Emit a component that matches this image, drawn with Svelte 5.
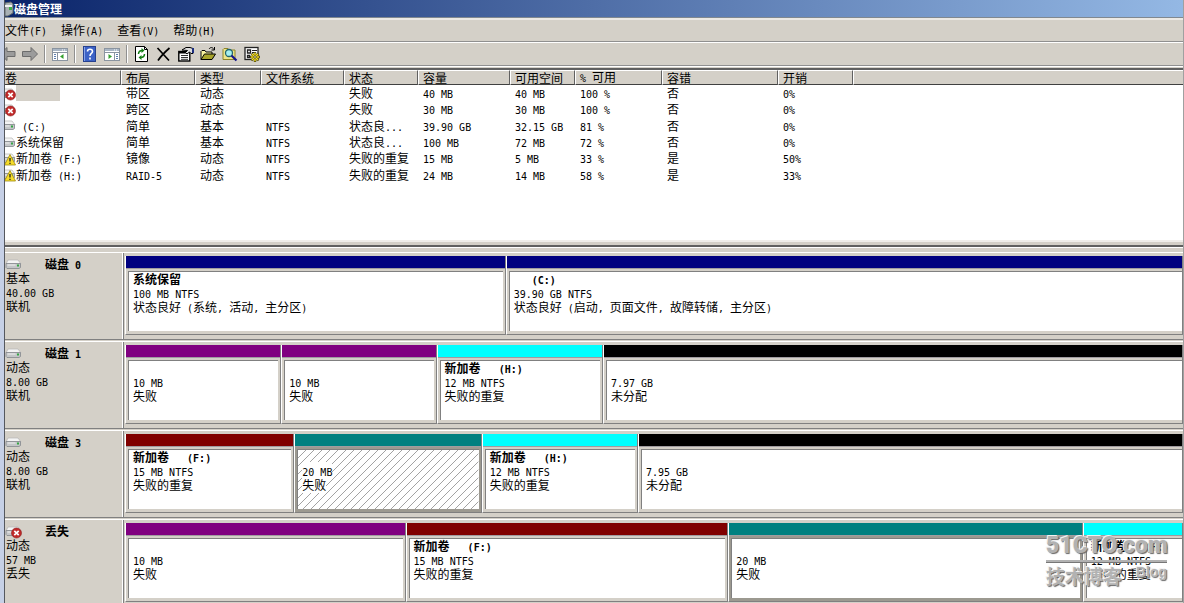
<script>
  // Menu bar
  const menus = ['文件(F)', '操作(A)', '查看(V)', '帮助(H)'];

  // Toolbar, in order
  const tools = [
    { id: 'back', label: '后退' },
    { id: 'forward', label: '前进' },
    { id: 'sep1' },
    { id: 'tree', label: '显示/隐藏控制台树' },
    { id: 'sep2' },
    { id: 'help', label: '帮助' },
    { id: 'actions', label: '显示/隐藏操作窗格' },
    { id: 'sep3' },
    { id: 'refresh', label: '刷新' },
    { id: 'delete', label: '删除' },
    { id: 'props', label: '属性' },
    { id: 'open', label: '打开' },
    { id: 'find', label: '查找' },
    { id: 'settings', label: '设置' }
  ];

  const columns = [
    { label: '卷', width: 116 },
    { label: '布局', width: 74 },
    { label: '类型', width: 66 },
    { label: '文件系统', width: 83 },
    { label: '状态', width: 74 },
    { label: '容量', width: 92 },
    { label: '可用空间', width: 65 },
    { label: '% 可用', width: 87 },
    { label: '容错', width: 116 },
    { label: '开销', width: 75 }
  ];

  const volumes = [
    { icon: 'error', name: '', selected: true, cells: ['带区', '动态', '', '失败', '40 MB', '40 MB', '100 %', '否', '0%'] },
    { icon: 'error', name: '', cells: ['跨区', '动态', '', '失败', '30 MB', '30 MB', '100 %', '否', '0%'] },
    { icon: 'ok', name: ' (C:)', cells: ['简单', '基本', 'NTFS', '状态良...', '39.90 GB', '32.15 GB', '81 %', '否', '0%'] },
    { icon: 'ok', name: '系统保留', cells: ['简单', '基本', 'NTFS', '状态良...', '100 MB', '72 MB', '72 %', '否', '0%'] },
    { icon: 'warn', name: '新加卷 (F:)', cells: ['镜像', '动态', 'NTFS', '失败的重复', '15 MB', '5 MB', '33 %', '是', '50%'] },
    { icon: 'warn', name: '新加卷 (H:)', cells: ['RAID-5', '动态', 'NTFS', '失败的重复', '24 MB', '14 MB', '58 %', '是', '33%'] }
  ];

  const navy = '#000080';
  const purple = '#800080';
  const cyan = '#00ffff';
  const maroon = '#800000';
  const teal = '#008080';
  const black = '#000000';

  // size is the share of the row's width
  const disks = [
    {
      name: '磁盘 0', icon: 'ok', info: ['基本', '40.00 GB', '联机'],
      parts: [
        { size: 378, color: navy, lines: ['系统保留', '100 MB NTFS', '状态良好 (系统, 活动, 主分区)'] },
        { size: 674, color: navy, lines: ['   (C:)', '39.90 GB NTFS', '状态良好 (启动, 页面文件, 故障转储, 主分区)'] }
      ]
    },
    {
      name: '磁盘 1', icon: 'ok', info: ['动态', '8.00 GB', '联机'],
      parts: [
        { size: 154, color: purple, lines: ['', '10 MB', '失败'] },
        { size: 153, color: purple, lines: ['', '10 MB', '失败'] },
        { size: 164, color: cyan, lines: ['新加卷   (H:)', '12 MB NTFS', '失败的重复'] },
        { size: 577, color: black, lines: ['', '7.97 GB', '未分配'] }
      ]
    },
    {
      name: '磁盘 3', icon: 'ok', info: ['动态', '8.00 GB', '联机'],
      parts: [
        { size: 167, color: maroon, lines: ['新加卷   (F:)', '15 MB NTFS', '失败的重复'] },
        { size: 185, color: teal, frame: true, hatch: true, lines: ['', '20 MB', '失败'] },
        { size: 154, color: cyan, lines: ['新加卷   (H:)', '12 MB NTFS', '失败的重复'] },
        { size: 542, color: black, lines: ['', '7.95 GB', '未分配'] }
      ]
    },
    {
      name: '丢失', icon: 'error', info: ['动态', '57 MB', '丢失'],
      parts: [
        { size: 278, color: purple, lines: ['', '10 MB', '失败'] },
        { size: 320, color: maroon, lines: ['新加卷   (F:)', '15 MB NTFS', '失败的重复'] },
        { size: 352, color: teal, frame: true, lines: ['', '20 MB', '失败'] },
        { size: 98, color: cyan, lines: ['新加卷   (H:)', '12 MB NTFS', '失败的重复'] }
      ]
    }
  ];

  // Split into half-width and full-width runs, each gets its own font
  function runs(text) {
    return text
      .split(/([\x20-\x7e]+)/)
      .filter(Boolean)
      .map((t) => ({ t, half: /^[\x20-\x7e]/.test(t) }));
  }
</script>

{#snippet txt(text)}{#each runs(text) as r}<span class:half={r.half}>{r.t}</span>{/each}{/snippet}

{#snippet drive(state)}
  <svg class="drive" width="17" height="15" viewBox="0 0 17 15" aria-hidden="true">
    <path d="M3 3h10l3 4H1z" fill="#f4f4f4" stroke="#b4b4b4" stroke-width=".7" />
    <path d="M1 6.500h14.500v4L14 11.500H2L1 10.500z" fill="#c4c6c8" stroke="#83878b" stroke-width=".8" />
    <path d="M2.500 8h8" stroke="#eee" />
    <rect x="12" y="7.500" width="2" height="2" fill="#35a545" />
    {#if state === 'error'}
      <circle cx="11.500" cy="9" r="5" fill="#c02a2a" stroke="#8e1d1d" stroke-width=".6" />
      <path d="M9.300 6.800l4.400 4.400M13.700 6.800l-4.400 4.400" stroke="#fff" stroke-width="1.700" />
    {:else if state === 'warn'}
      <path d="M11 3.500L16.500 14h-11z" fill="#f6dc2a" stroke="#a08a10" stroke-width=".8" />
      <path d="M11 7v3.500M11 11.700v1.300" stroke="#222" stroke-width="1.300" />
    {/if}
  </svg>
{/snippet}

{#snippet toolIcon(id)}
  <svg width="16" height="16" viewBox="0 0 16 16" aria-hidden="true">
    {#if id === 'back'}
      <path d="M-5 8l7-6.500v4h8v5H2v4z" fill="#9b9b9b" stroke="#6c6c6c" />
    {:else if id === 'forward'}
      <path d="M15.500 8L9 1.500v4H.5v5H9v4z" fill="#9b9b9b" stroke="#6c6c6c" />
    {:else if id === 'tree' || id === 'actions'}
      <rect x=".5" y="2.500" width="15" height="12" fill="#fff" stroke="#8a94a0" />
      <path d="M1 4h14" stroke="#a9b6c5" stroke-width="2" />
      <path d="M1 6.500h14" stroke="#8a94a0" />
      <path d="M10 4h1M12 4h1" stroke="#fff" />
      {#if id === 'tree'}
        <path d="M5.500 7v7" stroke="#8a94a0" />
        <path d="M2 8.500h2M2 10.500h2M2 12.500h2" stroke="#5f7fae" />
        <path d="M11.500 8v5L8 10.500z" fill="#35a02f" />
      {:else}
        <path d="M10.500 7v7" stroke="#8a94a0" />
        <path d="M12 8.500h2M12 10.500h2M12 12.500h2" stroke="#5f7fae" />
        <path d="M4.500 8v5L8 10.500z" fill="#35a02f" />
      {/if}
    {:else if id === 'help'}
      <rect x="1.500" y=".5" width="12" height="15" fill="#3c62c6" stroke="#26418f" />
      <path d="M2.500 1v14" stroke="#86a3ea" />
      <path d="M5.500 5.500c0-3 5-3 5 0 0 2-2.500 2-2.500 4.500M8 11.500v2" fill="none" stroke="#fff" stroke-width="1.600" />
    {:else if id === 'refresh'}
      <path d="M1.500.5h9l3 3v12h-12z" fill="#fff" stroke="#000" />
      <path d="M10.500.5v3h3" fill="none" stroke="#000" />
      <path d="M4.500 8c0-2.500 1.500-3.500 4-3.500M10.500 8c0 2.500-1.500 3.500-4 3.500" fill="none" stroke="#158015" stroke-width="1.500" />
      <path d="M7.500 2l3 2.500-3 2.500zM7.500 9l-3 2.500 3 2.500z" fill="#158015" />
    {:else if id === 'delete'}
      <path d="M1.500 2L13 14.500M13.500 2C9 6 5 10 2 14.500" stroke="#000" stroke-width="1.700" fill="none" />
    {:else if id === 'props'}
      <rect x=".8" y="5.500" width="11" height="9.500" fill="#fff" stroke="#000" stroke-width="1.400" />
      <path d="M1 6.500h8" stroke="#000" stroke-width="2" />
      <path d="M3 9.500h7M3 11.500h7M3 13.300h7" stroke="#333" />
      <path d="M4 4l4-2.500h4l3 1v5h-2l-1.500-1.500L9 8 7.500 6.500l2-2z" fill="#ddd" stroke="#000" />
      <rect x="14" y="2" width="2" height="5" fill="#1d2f80" />
    {:else if id === 'open'}
      <path d="M1 13.500v-8l1-1h3l1 1.500h6v3" fill="#f7f2a0" stroke="#000" />
      <path d="M1 13.500l3.500-5.500h11l-3.500 5.500z" fill="#a8a42c" stroke="#000" />
      <path d="M9 3c1.500-2 3.500-2 5 .5M14.500 1v3h-3" fill="none" stroke="#000" />
    {:else if id === 'find'}
      <path d="M1 13.500v-10l1-1h4l1 1.500h6v9.500z" fill="#efe58a" stroke="#8f8628" />
      <circle cx="7" cy="7" r="3.500" fill="#a8f0f0" stroke="#22666e" stroke-width="1.300" />
      <path d="M9.500 9.500l5 5" stroke="#16168c" stroke-width="2.200" />
    {:else}
      <rect x="1" y="1.500" width="13" height="12" fill="#fff" stroke="#222" stroke-width="1.300" />
      <path d="M3.500 4h3v3h-3zM3.500 9.500h2v2h-2z" fill="none" stroke="#222" stroke-width="1.300" />
      <path d="M8 4.500h5M8 6.500h4" stroke="#222" />
      <path d="M11 6v10M6 11h10M7.500 7.500l7 7M14.500 7.500l-7 7" stroke="#4a4408" stroke-width="2.400" />
      <path d="M11 6.800v8.400M6.800 11h8.400M8 8l6 6M14 8l-6 6" stroke="#f2dc20" stroke-width="1.500" />
      <circle cx="11" cy="11" r="1.300" fill="#fff" stroke="#5a5208" />
    {/if}
  </svg>
{/snippet}

<div class="window">
  <header class="title">
    <svg width="9" height="16" viewBox="0 0 9 16" aria-hidden="true">
      <path d="M0 2l6-1 2 2v9l-5 3H0z" fill="#a9b0b4" stroke="#5d666c" />
      <path d="M0 5h7" stroke="#f2f2f2" stroke-width="2" />
      <rect x="4" y="6" width="3" height="3" fill="#3cae46" />
    </svg>
    <h1>磁盘管理</h1>
  </header>

  <nav class="menu">
    {#each menus as m (m)}
      <button>{@render txt(m)}</button>
    {/each}
  </nav>

  <div class="toolbar" role="toolbar" aria-label="工具栏">
    {#each tools as tool (tool.id)}
      {#if tool.label}
        <button class:clipped={tool.id === 'back'} aria-label={tool.label}>{@render toolIcon(tool.id)}</button>
      {:else}
        <span class="sep"></span>
      {/if}
    {/each}
  </div>

  <section class="list">
    <table>
      <colgroup>
        {#each columns as c (c.label)}
          <col style="width: {c.width}px" />
        {/each}
        <col />
      </colgroup>
      <thead>
        <tr>
          {#each columns as c (c.label)}
            <th scope="col">{@render txt(c.label)}</th>
          {/each}
          <td></td>
        </tr>
      </thead>
      <tbody>
        {#each volumes as v}
          <tr>
            <td class="name">
              <div>
                <span class="crop">{@render drive(v.icon)}</span>
                <span class="label" class:selected={v.selected}>{@render txt(v.name)}</span>
              </div>
            </td>
            {#each v.cells as cell}
              <td>{@render txt(cell)}</td>
            {/each}
            <td></td>
          </tr>
        {/each}
      </tbody>
    </table>
  </section>

  <div class="splitter"></div>

  <section class="disks">
    {#each disks as disk (disk.name)}
      <article class="disk">
        <div class="info">
          <h2>{@render drive(disk.icon)}<span>{@render txt(disk.name)}</span></h2>
          {#each disk.info as line}
            <p>{@render txt(line)}</p>
          {/each}
        </div>
        <div class="parts">
          {#each disk.parts as part}
            <div class="part" class:frame={part.frame} style="flex-grow: {part.size}">
              <div class="bar" style="background: {part.color}"></div>
              <div class="box">
                <div class="body">
                  {#if part.hatch}
                    <svg class="hatch" width="100%" height="100%" aria-hidden="true">
                      <pattern id="hatch" width="8" height="8" patternUnits="userSpaceOnUse">
                        <path d="M-1 9L9-1M-1 1l2-2M7 9l2-2" stroke="#8c8c8c" stroke-width=".8" />
                      </pattern>
                      <rect width="100%" height="100%" fill="url(#hatch)" />
                    </svg>
                  {/if}
                  {#each part.lines as line, i}
                    <p class:strong={i === 0}><span class:ink={part.hatch}>{@render txt(line)}</span></p>
                  {/each}
                </div>
              </div>
            </div>
          {/each}
        </div>
      </article>
    {/each}
  </section>

  <div class="watermark">
    <strong>51CTO.com</strong>
    <div class="sub"><span>技术博客</span><em>Blog</em></div>
  </div>
</div>

<style>
  :global(body) {
    margin: 0;
    overflow: hidden;
    background: #c6d0e6;
  }

  .window {
    position: relative;
    display: flex;
    flex-direction: column;
    height: 100vh;
    box-sizing: border-box;
    margin-left: 4px;
    border-left: 1px solid #55585e;
    border-right: 1px solid #a0a0a0;
    overflow: hidden;
    background: #d4d0c8;
    color: #000;
    font: 12px/14px 'Noto Sans CJK SC', sans-serif;
  }

  .half {
    font-family: 'DejaVu Sans Mono', monospace;
    font-size: 10px;
    line-height: 10px;
    white-space: pre;
  }

  h1,
  h2,
  p {
    margin: 0;
    font-size: 12px;
  }

  button {
    padding: 0;
    border: none;
    background: none;
    color: inherit;
    font: inherit;
  }

  svg {
    display: block;
  }

  .title {
    display: flex;
    align-items: center;
    height: 17px;
    background: linear-gradient(to right, #0a246a, #94b8e4);
    border-bottom: 1px solid #808890;
    color: #fff;
  }

  .title h1 {
    line-height: 16px;
  }

  .menu {
    display: flex;
    gap: 14px;
    height: 20px;
    padding-bottom: 1px;
    border-top: 2px solid #ece9e4;
    border-bottom: 1px solid #909090;
    align-items: center;
  }

  .toolbar {
    display: flex;
    align-items: center;
    gap: 6px;
    height: 22px;
    border-top: 1px solid #fff;
    border-bottom: 1px solid #909090;
  }

  .clipped {
    width: 11px;
    overflow: hidden;
  }

  .sep {
    width: 1px;
    height: 18px;
    border-right: 1px solid #fff;
    background: #909090;
  }

  .list {
    height: 172px;
    padding-top: 1px;
    border-top: 1px solid #fff;
    background: linear-gradient(#d4d0c8 1px, #fff 1px);
  }

  .list table {
    width: 100%;
    height: 115px;
    border-top: 2px solid #606060;
    border-collapse: separate;
    border-spacing: 0;
    table-layout: fixed;
  }

  th,
  td {
    padding: 0 0 0 4px;
    font-weight: normal;
    text-align: left;
    white-space: nowrap;
    overflow: hidden;
  }

  thead th,
  thead td {
    height: 12px;
    border-top: 1px solid #fff;
    border-left: 1px solid #fff;
    border-right: 1px solid #606060;
    border-bottom: 1px solid #404040;
    background: #d4d0c8;
    line-height: 12px;
  }

  thead td {
    border-right: none;
  }

  tbody td {
    padding-left: 5px;
    line-height: 16px;
  }

  thead th:first-child,
  tbody td:first-child {
    padding-left: 0;
  }

  thead th:first-child {
    border-left: none;
  }

  .name div {
    display: flex;
    align-items: center;
    height: 16px;
  }

  .crop {
    display: flex;
    justify-content: flex-end;
    width: 11px;
    overflow: hidden;
  }

  .drive {
    flex: none;
  }

  .label.selected {
    width: 44px;
    height: 16px;
    background: #d4d0c8;
  }

  .splitter {
    height: 3px;
    border-top: 2px solid #f0eeea;
    border-bottom: 2px solid #606060;
    background: #d4d0c8;
  }

  .disks {
    flex: 1;
    min-height: 0;
    padding-top: 4px;
    border-top: 1px solid #fff;
    overflow: hidden;
  }

  .disk {
    display: flex;
    height: 86px;
    margin-bottom: 1px;
    border-top: 1px solid #fff;
    border-bottom: 1px solid #808080;
  }

  .info {
    flex: none;
    width: 117px;
    border-right: 1px solid #fff;
  }

  .info p {
    padding-left: 1px;
  }

  .info h2 {
    display: flex;
    align-items: center;
    gap: 23px;
    height: 14px;
    padding-top: 4px;
    line-height: 14px;
  }

  .parts {
    display: flex;
    flex: 1;
    min-width: 0;
    padding: 3px 0 0 1px;
    border-left: 1px solid #808080;
  }

  .part {
    flex: 1 1 0;
    min-width: 0;
    height: 78px;
    border-left: 1px solid #fff;
    border-right: 1px solid #808080;
    border-bottom: 1px solid #808080;
    overflow: hidden;
  }

  .bar {
    height: 12px;
  }

  .box {
    height: 66px;
    padding: 2px 2px 3px;
    box-sizing: border-box;
    border-top: 1px solid #a09ca0;
    background: #d4d0c8;
  }

  .frame .box {
    background: #9c9990;
  }

  .part:last-child .box {
    padding-right: 0;
  }

  .body {
    position: relative;
    height: 100%;
    box-sizing: border-box;
    padding-left: 4px;
    border-top: 1px solid #808080;
    border-left: 1px solid #808080;
    background: #fff;
    white-space: nowrap;
    overflow: hidden;
  }

  .body p {
    position: relative;
    height: 14px;
  }

  .hatch {
    position: absolute;
    inset: 0;
  }

  .ink {
    background: #fff;
  }

  .strong {
    font-weight: bold;
  }

  /* Site mark over the bottom right corner */
  .watermark {
    position: absolute;
    right: 16px;
    bottom: 15px;
    width: 121px;
    color: #b2b2b2;
    text-shadow: -1px -1px 0 #f2f2f2, 1px 1px 1px #666;
  }

  .watermark strong {
    display: block;
    border-bottom: 2px solid #b2b2b2;
    box-shadow: 0 1px 0 #777;
    font: 900 23px/28px Roboto, 'Liberation Sans', sans-serif;
  }

  .sub {
    display: flex;
    justify-content: space-between;
    padding-top: 2px;
    font-size: 19px;
    font-weight: bold;
    line-height: 24px;
  }

  .sub em {
    font: bold 14px/16px 'Liberation Sans', sans-serif;
  }
</style>
